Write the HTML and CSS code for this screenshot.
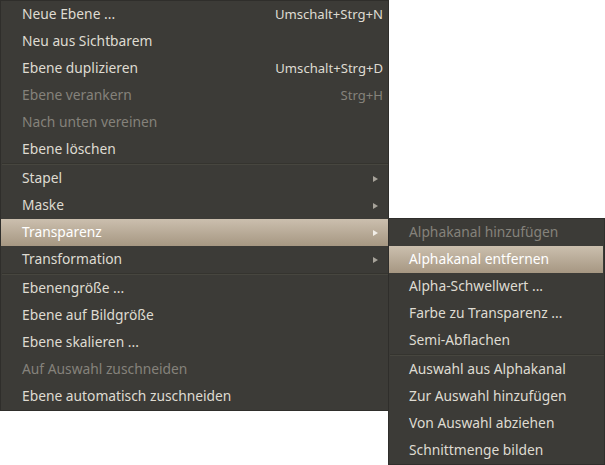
FILE: index.html
```html
<!DOCTYPE html>
<html>
<head>
<meta charset="utf-8">
<link rel="stylesheet" href="styles.css">
</head>
<body>
<div class="stage">
  <div class="menu main">
    <div class="item"><span class="label">Neue Ebene ...</span><span class="accel">Umschalt+Strg+N</span></div>
    <div class="item"><span class="label">Neu aus Sichtbarem</span></div>
    <div class="item"><span class="label">Ebene duplizieren</span><span class="accel">Umschalt+Strg+D</span></div>
    <div class="item disabled"><span class="label">Ebene verankern</span><span class="accel">Strg+H</span></div>
    <div class="item disabled"><span class="label">Nach unten vereinen</span></div>
    <div class="item"><span class="label">Ebene löschen</span></div>
    <div class="sep"></div>
    <div class="item"><span class="label">Stapel</span><span class="arrow"></span></div>
    <div class="item"><span class="label">Maske</span><span class="arrow"></span></div>
    <div class="item active"><span class="label">Transparenz</span><span class="arrow"></span></div>
    <div class="item"><span class="label">Transformation</span><span class="arrow"></span></div>
    <div class="sep"></div>
    <div class="item"><span class="label">Ebenengröße ...</span></div>
    <div class="item"><span class="label">Ebene auf Bildgröße</span></div>
    <div class="item"><span class="label">Ebene skalieren ...</span></div>
    <div class="item disabled"><span class="label">Auf Auswahl zuschneiden</span></div>
    <div class="item"><span class="label">Ebene automatisch zuschneiden</span></div>
  </div>
  <div class="menu sub">
    <div class="item disabled"><span class="label">Alphakanal hinzufügen</span></div>
    <div class="item active"><span class="label">Alphakanal entfernen</span></div>
    <div class="item"><span class="label">Alpha-Schwellwert ...</span></div>
    <div class="item"><span class="label">Farbe zu Transparenz ...</span></div>
    <div class="item"><span class="label">Semi-Abflachen</span></div>
    <div class="sep"></div>
    <div class="item"><span class="label">Auswahl aus Alphakanal</span></div>
    <div class="item"><span class="label">Zur Auswahl hinzufügen</span></div>
    <div class="item"><span class="label">Von Auswahl abziehen</span></div>
    <div class="item"><span class="label">Schnittmenge bilden</span></div>
  </div>
</div>
</body>
</html>
```
FILE: styles.css
```css
html, body {
  margin: 0;
  padding: 0;
  background: #ffffff;
  width: 605px;
  height: 465px;
  overflow: hidden;
}
.stage {
  position: relative;
  width: 605px;
  height: 465px;
}
.menu {
  background: #3c3b37;
  border: 1px solid #2f2e2b;
  box-sizing: border-box;
  font-family: "Noto Sans", "Open Sans", sans-serif;
  font-size: 13.8px;
  color: #dfdbd2;
  display: flex;
  flex-direction: column;
  padding: 0;
}
.main {
  width: 389px;
  height: 411px;
}
.sub {
  position: absolute;
  left: 388px;
  top: 218px;
  width: 217px;
  height: 247px;
}
.item {
  height: 27px;
  box-sizing: border-box;
  flex: none;
  display: flex;
  align-items: center;
  padding: 0 5px 2px 21px;
  white-space: nowrap;
}
.sub .item {
  padding-left: 20px;
}
.label {
  flex: 1;
}
.accel {
  color: #dfdbd2;
  font-size: 13.1px;
}
.disabled .label, .disabled .accel {
  color: #85827b;
}
.active {
  background: linear-gradient(#cbbfae, #a69782);
  color: #ffffff;
}
.sub .active {
  margin-right: 1px;
}
.arrow {
  width: 0;
  height: 0;
  border-left: 5px solid #a7a39a;
  border-top: 3px solid transparent;
  border-bottom: 3px solid transparent;
  margin: 2px 5px 0 0;
}
.active .arrow {
  border-left-color: #f2eee8;
}
.sep {
  height: 2px;
  flex: none;
  box-sizing: border-box;
  border-top: 1px solid #35342f;
  border-bottom: 1px solid #47463f;
  margin: 0 0 0 1px;
}
```
